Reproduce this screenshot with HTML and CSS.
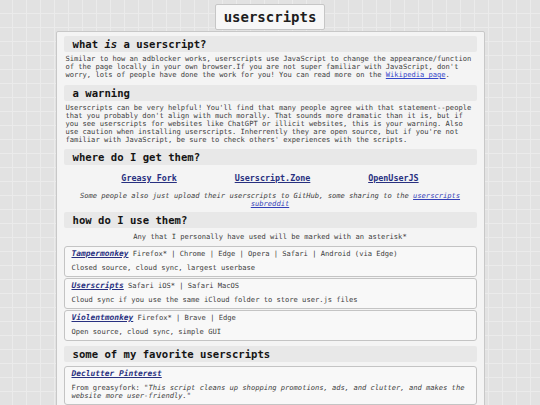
FILE: index.html
```html
<!DOCTYPE html>
<html lang="en">
<head>
<meta charset="utf-8">
<title>userscripts</title>
<link rel="stylesheet" href="styles.css">
</head>
<body>
<header class="top">
  <h1 class="title">userscripts</h1>
</header>
<main class="sheet">
  <h2 class="sec sec-first">what <i>is</i> a userscript?</h2>
  <p class="txt">Similar to how an adblocker works, userscripts use JavaScript to change the appearance/function of the page locally in your own browser.If you are not super familiar with JavaScript, don't worry, lots of people have done the work for you! You can read more on the <a class="lnk" href="#">Wikipedia page</a>.</p>

  <h2 class="sec sec-a">a warning</h2>
  <p class="txt">Userscripts can be very helpful! You'll find that many people agree with that statement--people that you probably don't align with much morally. That sounds more dramatic than it is, but if you see userscripts for websites like ChatGPT or illicit websites, this is your warning. Also use caution when installing userscripts. Inherrently they are open source, but if you're not familiar with JavaScript, be sure to check others' experiences with the scripts.</p>

  <h2 class="sec sec-b">where do I get them?</h2>
  <nav class="sources">
    <a class="blnk" href="#">Greasy Fork</a>
    <a class="blnk" href="#">Userscript.Zone</a>
    <a class="blnk" href="#">OpenUserJS</a>
  </nav>
  <p class="note">Some people also just upload their userscripts to GitHub, some sharing to the <a class="ilnk" href="#">userscripts subreddit</a></p>

  <h2 class="sec sec-c">how do I use them?</h2>
  <p class="center">Any that I personally have used will be marked with an asterisk*</p>

  <div class="card card-first">
    <div class="card-title"><a class="clnk" href="#">Tampermonkey</a> Firefox* | Chrome | Edge | Opera | Safari | Android (via Edge)</div>
    <div class="card-desc">Closed source, cloud sync, largest userbase</div>
  </div>
  <div class="card">
    <div class="card-title"><a class="clnk" href="#">Userscripts</a> Safari iOS* | Safari MacOS</div>
    <div class="card-desc">Cloud sync if you use the same iCloud folder to store user.js files</div>
  </div>
  <div class="card">
    <div class="card-title"><a class="clnk" href="#">Violentmonkey</a> Firefox* | Brave | Edge</div>
    <div class="card-desc">Open source, cloud sync, simple GUI</div>
  </div>

  <h2 class="sec sec-d">some of my favorite userscripts</h2>
  <div class="card card-fav">
    <div class="card-title"><a class="clnk" href="#">Declutter Pinterest</a></div>
    <div class="card-desc">From greasyfork: <i>"This script cleans up shopping promotions, ads, and clutter, and makes the website more user-friendly."</i></div>
  </div>
</main>
</body>
</html>
```

FILE: styles.css
```css
html, body {
  margin: 0;
  padding: 0;
}

body {
  font-family: "DejaVu Sans Mono", "Liberation Mono", monospace;
  color: #3c3c3c;
  background-color: #e2e2e2;
  background-image:
    linear-gradient(#ebebeb 1px, transparent 1px),
    linear-gradient(90deg, #ebebeb 1px, transparent 1px);
  background-size: 14px 14px;
  background-position: 12px 13px;
  min-height: 405px;
}

.top {
  display: flex;
  justify-content: center;
  padding-top: 4px;
}

.title {
  margin: 0;
  padding: 0 8px;
  font-size: 14px;
  line-height: 24px;
  font-weight: bold;
  color: #1e1e1e;
  background: #f7f7f7;
  border: 1px solid #c6c6c6;
  border-radius: 2px;
}

.sheet {
  width: 413px;
  margin: 1px auto 0;
  padding: 4px 7px 8px;
  background: #f4f4f4;
  border: 1px solid #c8c8c8;
  border-radius: 2px;
}

.sec {
  margin: 0;
  padding: 0 9px;
  font-size: 10.6px;
  line-height: 16px;
  font-weight: bold;
  color: #141414;
  background: #e8e8e8;
  border-radius: 2px;
}

.sec-a { margin-top: 6px; }
.sec-b { margin-top: 5px; }
.sec-c { margin-top: 4px; }
.sec-d { margin-top: 5px; }

.txt {
  margin: 3px 0 0 2px;
  width: 96ch;
  font-size: 7.1px;
  line-height: 8px;
}

.lnk {
  color: #3446c9;
  text-decoration: underline;
}

.sources {
  display: flex;
  justify-content: space-evenly;
  margin-top: 8px;
  font-size: 8.4px;
  line-height: 10px;
}

.blnk {
  color: #283080;
  font-weight: bold;
  text-decoration: underline;
}

.note {
  margin: 9px auto 0;
  width: 96ch;
  font-size: 7.1px;
  line-height: 8px;
  font-style: italic;
  text-align: center;
}

.ilnk {
  color: #3340b8;
  text-decoration: underline;
}

.center {
  margin: 5px 0 0;
  font-size: 7.1px;
  line-height: 8px;
  text-align: center;
}

.card {
  margin-top: 1px;
  padding: 2px 7px 4px;
  background: #f8f8f8;
  border: 1px solid #c4c4c4;
  border-radius: 3px;
}

.card-first { margin-top: 5px; }
.card-fav { margin-top: 4px; }

.card-title {
  font-size: 7.1px;
  line-height: 9px;
  white-space: nowrap;
}

.clnk {
  font-size: 7.9px;
  font-weight: bold;
  font-style: italic;
  color: #283080;
  text-decoration: underline;
}

.card-desc {
  margin-top: 6px;
  font-size: 7.1px;
  line-height: 8px;
}
```
